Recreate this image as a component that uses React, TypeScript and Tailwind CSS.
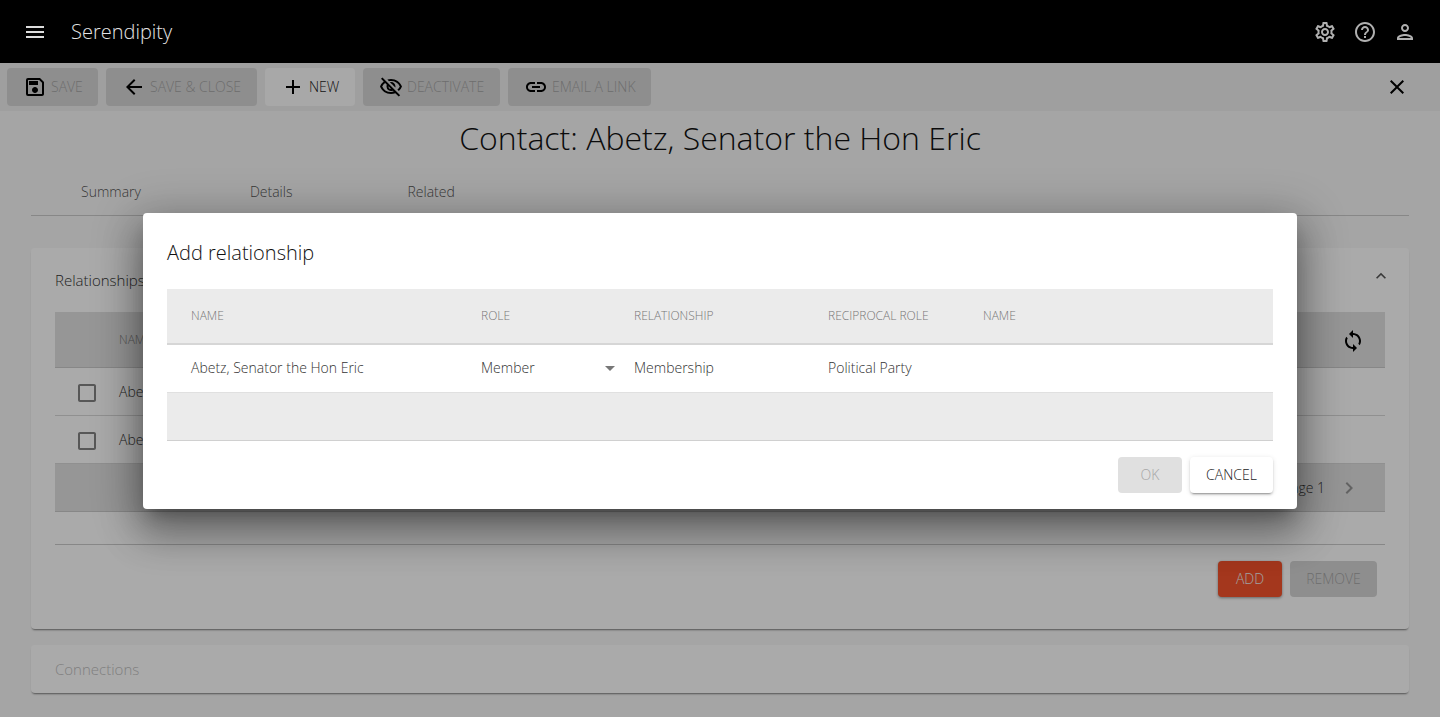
import React from 'react';
import {
  MdMenu,
  MdOutlineSettings,
  MdHelpOutline,
  MdOutlinePerson,
  MdOutlineSave,
  MdArrowBack,
  MdAdd,
  MdOutlineVisibilityOff,
  MdLink,
  MdClose,
  MdExpandLess,
  MdSync,
  MdChevronRight,
  MdArrowDropDown,
  MdCheckBoxOutlineBlank,
} from 'react-icons/md';

const font = "font-['Open_Sans',sans-serif]";

function ToolButton({
  icon,
  label,
  width,
  active,
}: {
  icon: React.ReactNode;
  label: string;
  width: string;
  active?: boolean;
}) {
  return (
    <button
      className={`h-[38px] pl-4 rounded flex items-center gap-1 text-sm font-light uppercase ${width} ${
        active ? 'bg-[#f8f8f8] text-[#222]' : 'bg-[#d2d2d2] text-[#a2a2a2]'
      }`}
    >
      <span className="text-black text-2xl">{icon}</span>
      {label}
    </button>
  );
}

function RelationshipRow() {
  return (
    <div className="h-12 flex items-center border-b border-[#d5d5d5]">
      <MdCheckBoxOutlineBlank className="ml-5 mt-0.5 text-2xl text-[#808080]" />
      <span className="ml-5 text-sm font-light text-[#333]">Abetz, Senator the Hon Eric</span>
    </div>
  );
}

export default function App() {
  return (
    <div className={`relative h-screen overflow-hidden bg-[#f4f4f4] ${font}`}>
      <header className="relative z-10 h-[63px] bg-black flex items-center pl-[23px] pr-[23px]">
        <MdMenu className="text-2xl text-[#dcdcdc]" />
        <span className="ml-6 text-xl font-light text-[#e4e4e4]">Serendipity</span>
        <div className="ml-auto flex items-center gap-4 text-[#b0b0b0]">
          <MdOutlineSettings className="text-2xl" />
          <MdHelpOutline className="text-2xl" />
          <MdOutlinePerson className="text-2xl" />
        </div>
      </header>

      <div className="h-12 bg-[#ebebeb] flex items-center pl-[7px] pr-[31px] gap-2">
        <ToolButton icon={<MdOutlineSave />} label="Save" width="w-[91px]" />
        <ToolButton icon={<MdArrowBack />} label="Save & Close" width="w-[151px]" />
        <ToolButton icon={<MdAdd />} label="New" width="w-[90px]" active />
        <ToolButton icon={<MdOutlineVisibilityOff />} label="Deactivate" width="w-[137px]" />
        <ToolButton icon={<MdLink />} label="Email a link" width="w-[143px]" />
        <MdClose className="ml-auto text-2xl text-black" />
      </div>

      <main className="px-[31px]">
        <h1 className="mt-[5px] text-center text-[32px] leading-[44px] font-light text-[#111]">
          Contact: Abetz, Senator the Hon Eric
        </h1>
        <div className="mt-[9px] h-[47px] flex border-b border-[#c8c8c8] text-sm font-light text-[#555]">
          <span className="ml-[50px] mt-[13px]">Summary</span>
          <span className="ml-[109px] mt-[13px]">Details</span>
          <span className="ml-[115px] mt-[13px]">Related</span>
        </div>

        <section className="mt-8 h-[381px] bg-[#fbfbfb] rounded shadow-[0_2px_2px_-1px_rgba(0,0,0,0.5)] px-6">
          <div className="h-16 flex items-center justify-between">
            <span className="text-[15px] font-light text-[#333]">Relationships</span>
            <MdExpandLess className="text-xl text-[#555] -mr-[6px] -mt-[8px]" />
          </div>
          <div className="h-14 bg-[#dedede] border-b border-[#c8c8c8] flex items-center">
            <span className="ml-16 text-xs font-light text-[#808080]">NAME</span>
            <MdSync className="ml-auto mr-5 mt-0.5 text-2xl text-black" />
          </div>
          <RelationshipRow />
          <RelationshipRow />
          <div className="h-12 bg-[#dedede] border-b border-[#c8c8c8] flex items-center justify-end text-sm font-light text-[#333]">
            Page 1
            <MdChevronRight className="ml-3 mr-6 text-2xl text-[#929292]" />
          </div>
          <div className="mt-8 border-t border-[#c8c8c8] flex justify-end gap-2 pt-4 pr-2">
            <button className="h-9 w-16 rounded bg-[#f2522b] text-[#eee] text-sm font-light shadow-[0_1px_3px_rgba(0,0,0,0.4)]">
              ADD
            </button>
            <button className="h-9 w-[87px] rounded bg-[#d2d2d2] text-[#a2a2a2] text-sm font-light">REMOVE</button>
          </div>
        </section>

        <section className="mt-4 h-12 bg-[#fbfbfb] rounded shadow-[0_2px_2px_-1px_rgba(0,0,0,0.5)] px-6 flex items-center text-[15px] font-light text-[#bcbcbc]">
          Connections
        </section>
      </main>

      {/* scrim and dialog */}
      <div className="absolute inset-0 bg-black/[0.32]" />
      <div className="absolute left-[143px] top-[213px] w-[1154px] h-[296px] bg-white rounded p-6 shadow-[0_11px_15px_-7px_rgba(0,0,0,0.25),0_24px_38px_3px_rgba(0,0,0,0.26),0_9px_46px_8px_rgba(0,0,0,0.24)]">
        <h2 className="text-xl leading-8 font-light text-[#111]">Add relationship</h2>
        <div className="mt-5 text-sm font-light text-[#333]">
          <div className="h-14 bg-[#ebebeb] border-b-2 border-[#d6d6d6] grid grid-cols-[314px_153px_194px_155px_1fr] items-center text-xs text-[#777]">
            <span className="pl-6">NAME</span>
            <span>ROLE</span>
            <span>RELATIONSHIP</span>
            <span>RECIPROCAL ROLE</span>
            <span>NAME</span>
          </div>
          <div className="h-12 pb-0.5 border-b border-[#e0e0e0] grid grid-cols-[314px_153px_194px_155px_1fr] items-center">
            <span className="pl-6">Abetz, Senator the Hon Eric</span>
            <span className="flex items-center justify-between pr-3">
              Member
              <MdArrowDropDown className="text-2xl text-[#777]" />
            </span>
            <span>Membership</span>
            <span>Political Party</span>
            <span />
          </div>
          <div className="h-12 bg-[#ebebeb] border-b border-[#d0d0d0]" />
        </div>
        <div className="mt-4 flex justify-end gap-2">
          <button className="h-9 w-16 rounded bg-[#e0e0e0] text-sm font-light text-[#a6a6a6]">OK</button>
          <button className="h-9 w-[83px] rounded bg-white text-sm font-light text-[#222] shadow-[0_3px_1px_-2px_rgba(0,0,0,0.2),0_2px_2px_0_rgba(0,0,0,0.14),0_1px_5px_0_rgba(0,0,0,0.12)]">
            CANCEL
          </button>
        </div>
      </div>
    </div>
  );
}
